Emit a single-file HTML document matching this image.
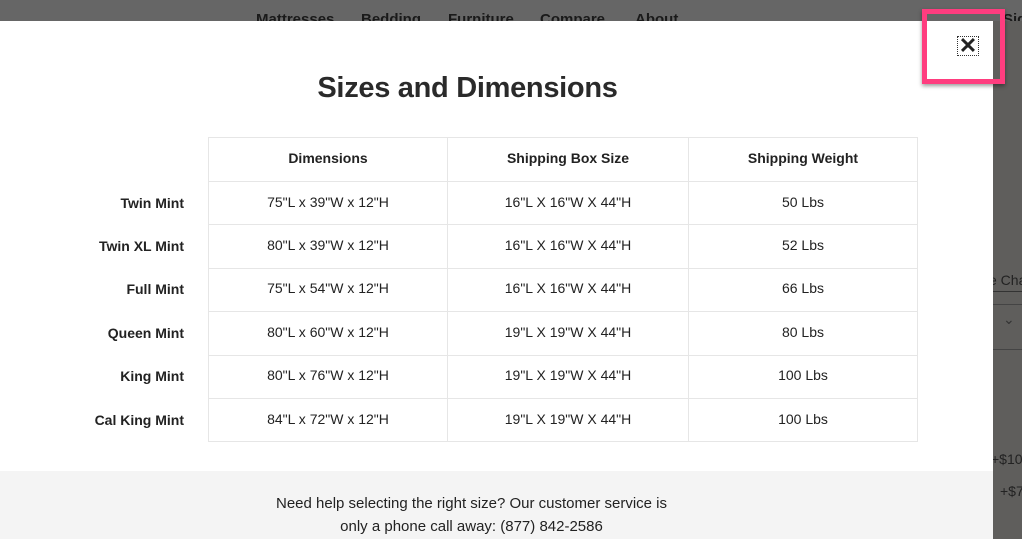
<!DOCTYPE html>
<html><head><meta charset="utf-8"><style>
*{margin:0;padding:0;box-sizing:border-box}
body{width:1022px;height:539px;overflow:hidden;background:#666;font-family:"Liberation Sans",sans-serif;position:relative;color:#222}
.nav{position:absolute;top:11px;font-size:15px;font-weight:bold;color:#1a1a1a}
.modal{position:absolute;left:0;top:21px;width:993px;height:518px;background:#fff}
.strip{position:absolute;left:993px;top:21px;width:29px;height:518px;background:#5f5e5c;overflow:hidden}
h1{position:absolute;left:0;width:935px;top:51px;text-align:center;font-size:29px;font-weight:bold;color:#2a2a2a;letter-spacing:-0.3px}
table{position:absolute;left:208px;top:116px;border-collapse:collapse;font-size:14px}
td,th{border:1px solid #e6e6e6;text-align:center;color:#222;font-weight:normal;padding-bottom:3px}
th{height:44px;font-weight:bold}
td{height:43.4px}
.lab{position:absolute;right:809px;font-size:14px;font-weight:bold;text-align:right;white-space:nowrap}
.foot{position:absolute;left:0;top:450px;width:993px;height:68px;background:#f4f4f4;text-align:center;font-size:15px;line-height:23px;padding-top:21px;padding-right:50px;color:#222}
.pink{position:absolute;left:922px;top:9px;width:83px;height:75px;border:5px solid #ff3d7f;box-shadow:0 2px 4px rgba(0,0,0,.4)}
.x{position:absolute;left:957px;top:36px;width:22px;height:20px;border:1px dotted #333;font-size:22px;font-weight:bold;line-height:18px;text-align:center}
.side{position:absolute;font-size:14px;color:#222;white-space:nowrap}
</style></head><body>
<div class="nav" style="left:256px">Mattresses</div>
<div class="nav" style="left:361px">Bedding</div>
<div class="nav" style="left:448px">Furniture</div>
<div class="nav" style="left:540px">Compare</div>
<div class="nav" style="left:635px">About</div>
<div class="nav" style="left:1003px">Sign</div>
<div class="strip">
<div class="side" style="left:-4px;top:251px">e Cha</div>
<div style="position:absolute;left:0;top:270px;width:29px;height:1px;background:#333"></div>
<div style="position:absolute;left:0;top:283px;width:29px;height:1px;background:#444"></div>
<div class="side" style="left:10px;top:290px;color:#333">&#8964;</div>
<div style="position:absolute;left:0;top:328px;width:29px;height:1px;background:#444"></div>
<div class="side" style="left:-2px;top:430px">+$10</div>
<div class="side" style="left:7px;top:462px">+$7</div>
</div>
<div class="modal">
<h1>Sizes and Dimensions</h1>
<table>
<tr><th style="width:239px">Dimensions</th><th style="width:241px">Shipping Box Size</th><th style="width:229px">Shipping Weight</th></tr>
<tr><td>75"L x 39"W x 12"H</td><td>16"L X 16"W X 44"H</td><td>50 Lbs</td></tr>
<tr><td>80"L x 39"W x 12"H</td><td>16"L X 16"W X 44"H</td><td>52 Lbs</td></tr>
<tr><td>75"L x 54"W x 12"H</td><td>16"L X 16"W X 44"H</td><td>66 Lbs</td></tr>
<tr><td>80"L x 60"W x 12"H</td><td>19"L X 19"W X 44"H</td><td>80 Lbs</td></tr>
<tr><td>80"L x 76"W x 12"H</td><td>19"L X 19"W X 44"H</td><td>100 Lbs</td></tr>
<tr><td>84"L x 72"W x 12"H</td><td>19"L X 19"W X 44"H</td><td>100 Lbs</td></tr>
</table>
<div class="lab" style="top:174px">Twin Mint</div>
<div class="lab" style="top:217px">Twin XL Mint</div>
<div class="lab" style="top:260px">Full Mint</div>
<div class="lab" style="top:304px">Queen Mint</div>
<div class="lab" style="top:347px">King Mint</div>
<div class="lab" style="top:391px">Cal King Mint</div>
<div class="foot">Need help selecting the right size? Our customer service is<br>only a phone call away: (877) 842-2586</div>
</div>
<div class="pink"></div>
<div class="x">✕</div>
</body></html>
